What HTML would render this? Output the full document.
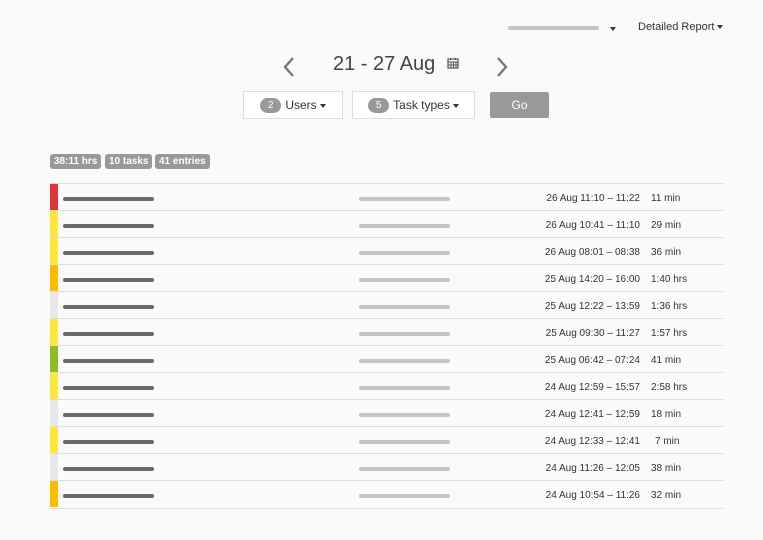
<!DOCTYPE html>
<html><head><style>
*{margin:0;padding:0;box-sizing:border-box}
body{width:763px;height:540px;background:#fafafa;font-family:"Liberation Sans",sans-serif;position:relative;overflow:hidden;color:#333}
.a{position:absolute}
.caret{display:inline-block;width:0;height:0;border-left:3px solid transparent;border-right:3px solid transparent;border-top:4px solid #333;vertical-align:middle;margin-left:3px}
.btn{position:absolute;top:91px;height:28px;border:1px solid #ddd;background:#fff;font-size:12px;line-height:26px;text-align:center;color:#333}
.pill{display:inline-block;background:#999;color:#fff;border-radius:9px;font-size:10px;line-height:15px;height:15px;min-width:21px;margin-right:4px;vertical-align:1px}
.tag{position:absolute;top:154px;height:15px;background:#999;color:#fff;font-size:10px;font-weight:bold;line-height:16px;border-radius:3px;padding:0 4px}
.row{position:absolute;left:50px;width:673px;height:27px;border-top:1px solid #ddd}
.bar{position:absolute;left:0;top:0;width:8px;height:26px}
.d{position:absolute;left:13px;top:13px;width:91px;height:4px;background:#6b6b6b;border-radius:2px}
.l{position:absolute;left:309px;top:13px;width:91px;height:4px;background:#c4c4c4;border-radius:2px}
.t{position:absolute;right:83px;top:9px;font-size:10px;color:#333}
.m{position:absolute;left:601px;top:9px;font-size:10px;color:#333}
</style></head><body>
<div class="a" style="left:508px;top:26px;width:91px;height:4px;background:#c4c4c4;border-radius:2px"></div>
<div class="a" style="left:607px;top:20px"><span class="caret"></span></div>
<div class="a" style="left:638px;top:21px;font-size:11px">Detailed Report<span class="caret"></span></div>
<svg class="a" style="left:282px;top:56px" width="14" height="22"><path d="M11 2 L3 11 L11 20" stroke="#777" stroke-width="2.4" fill="none"/></svg>
<svg class="a" style="left:495px;top:56px" width="14" height="22"><path d="M3 2 L11 11 L3 20" stroke="#777" stroke-width="2.4" fill="none"/></svg>
<div class="a" style="left:333px;top:53px;font-size:20px;color:#444">21 - 27 Aug</div>
<svg class="a" style="left:447px;top:57px" width="12" height="12"><rect x="1" y="2" width="10" height="9" fill="none" stroke="#555" stroke-width="1.2"/><path d="M1 5H11M4 5V11M6.5 5V11M9 5V11M1 8H11M3.5 1V3M8.5 1V3" stroke="#555" stroke-width="1"/></svg>
<div class="btn" style="left:243px;width:100px"><span class="pill">2</span>Users<span class="caret"></span></div>
<div class="btn" style="left:352px;width:123px"><span class="pill">5</span>Task types<span class="caret"></span></div>
<div class="a" style="left:490px;top:92px;width:59px;height:26px;background:#999;border-radius:2px;color:#fff;font-size:12px;line-height:26px;text-align:center">Go</div>
<div class="tag" style="left:50px">38:11 hrs</div>
<div class="tag" style="left:105px">10 tasks</div>
<div class="tag" style="left:155px">41 entries</div>
<div class="a" style="left:50px;top:508px;width:673px;border-top:1px solid #ddd"></div>
<div class="row" style="top:183px"><div class="bar" style="background:#de3535"></div><div class="d"></div><div class="l"></div><div class="t">26 Aug 11:10 – 11:22</div><div class="m">11 min</div></div>
<div class="row" style="top:210px"><div class="bar" style="background:#fde83a"></div><div class="d"></div><div class="l"></div><div class="t">26 Aug 10:41 – 11:10</div><div class="m">29 min</div></div>
<div class="row" style="top:237px"><div class="bar" style="background:#fde83a"></div><div class="d"></div><div class="l"></div><div class="t">26 Aug 08:01 – 08:38</div><div class="m">36 min</div></div>
<div class="row" style="top:264px"><div class="bar" style="background:#fdbb00"></div><div class="d"></div><div class="l"></div><div class="t">25 Aug 14:20 – 16:00</div><div class="m">1:40 hrs</div></div>
<div class="row" style="top:291px"><div class="bar" style="background:#e8e8e8"></div><div class="d"></div><div class="l"></div><div class="t">25 Aug 12:22 – 13:59</div><div class="m">1:36 hrs</div></div>
<div class="row" style="top:318px"><div class="bar" style="background:#fde83a"></div><div class="d"></div><div class="l"></div><div class="t">25 Aug 09:30 – 11:27</div><div class="m">1:57 hrs</div></div>
<div class="row" style="top:345px"><div class="bar" style="background:#8cbb25"></div><div class="d"></div><div class="l"></div><div class="t">25 Aug 06:42 – 07:24</div><div class="m">41 min</div></div>
<div class="row" style="top:372px"><div class="bar" style="background:#fde83a"></div><div class="d"></div><div class="l"></div><div class="t">24 Aug 12:59 – 15:57</div><div class="m">2:58 hrs</div></div>
<div class="row" style="top:399px"><div class="bar" style="background:#e8e8e8"></div><div class="d"></div><div class="l"></div><div class="t">24 Aug 12:41 – 12:59</div><div class="m">18 min</div></div>
<div class="row" style="top:426px"><div class="bar" style="background:#fde83a"></div><div class="d"></div><div class="l"></div><div class="t">24 Aug 12:33 – 12:41</div><div class="m" style="left:605px">7 min</div></div>
<div class="row" style="top:453px"><div class="bar" style="background:#e8e8e8"></div><div class="d"></div><div class="l"></div><div class="t">24 Aug 11:26 – 12:05</div><div class="m">38 min</div></div>
<div class="row" style="top:480px"><div class="bar" style="background:#fdbb00"></div><div class="d"></div><div class="l"></div><div class="t">24 Aug 10:54 – 11:26</div><div class="m">32 min</div></div>
</body></html>
